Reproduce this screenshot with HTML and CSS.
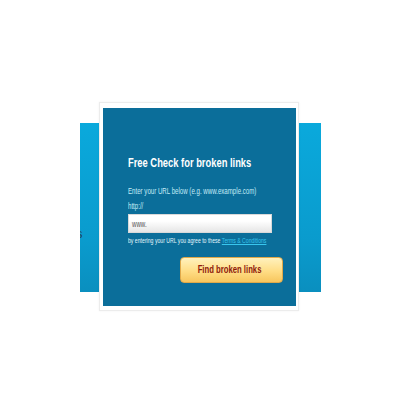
FILE: index.html
```html
<!DOCTYPE html>
<html>
<head>
<meta charset="utf-8">
<link rel="stylesheet" href="styles.css">
</head>
<body>
<div class="stage">
  <div class="strip strip-left"><span class="peek">s</span></div>
  <div class="card">
    <div class="panel">
      <h1 class="title"><span class="cond cond-title">Free Check for broken links</span></h1>
      <p class="hint"><span class="cond cond-hint">Enter your URL below (e.g. www.example.com)</span></p>
      <p class="proto"><span class="cond cond-hint">http://</span></p>
      <div class="field"><span class="cond cond-hint">www.</span></div>
      <p class="agree"><span class="cond cond-agree">by entering your URL you agree to these <a class="terms" href="#">Terms &amp; Conditions</a></span></p>
      <div class="actions"><button class="btn"><span class="cond cond-btn">Find broken links</span></button></div>
    </div>
  </div>
  <div class="strip strip-right"></div>
</div>
</body>
</html>
```
FILE: styles.css
```css
html, body {
  margin: 0;
  padding: 0;
  background: #ffffff;
}
body {
  width: 400px;
  height: 400px;
  overflow: hidden;
  font-family: "Liberation Sans", Arial, sans-serif;
}
.stage {
  display: flex;
  align-items: flex-start;
  padding: 102px 0 0 80px;
}
.strip {
  width: 20px;
  height: 169px;
  margin-top: 21px;
  background: linear-gradient(#0aa9dc, #0a9bcd 70%, #0a8fbf);
  overflow: hidden;
  position: relative;
}
.strip-left {
  margin-right: -1px;
}
.strip-right {
  width: 22px;
}
.peek {
  position: absolute;
  left: -4px;
  top: 103px;
  font-size: 13px;
  line-height: 16px;
  color: #1d4760;
}
.card {
  position: relative;
  z-index: 1;
  background: #ffffff;
  border: 1px solid #ececec;
  padding: 5px 2px 4px 3px;
  box-shadow: 0 0 2px rgba(0,0,0,0.06);
}
.panel {
  width: 193px;
  height: 198px;
  box-sizing: border-box;
  background: #0b6e9a;
  padding: 47px 0 0 25px;
  color: #c5ecf7;
}
.cond {
  display: inline-block;
  white-space: nowrap;
  transform-origin: left center;
}
.cond-title { transform: scaleX(0.78); }
.cond-hint { transform: scaleX(0.72); }
.cond-agree { transform: scaleX(0.735); }
.cond-btn { transform: scaleX(0.7); transform-origin: center center; }
.title {
  margin: 0;
  font-size: 12px;
  line-height: 16px;
  font-weight: bold;
  color: #ffffff;
  white-space: nowrap;
}
.hint {
  margin: 15px 0 0;
  font-size: 8.5px;
  line-height: 11px;
  white-space: nowrap;
}
.proto {
  margin: 4px 0 0;
  font-size: 8.5px;
  line-height: 11px;
}
.field {
  margin-top: 2px;
  width: 144px;
  height: 19px;
  box-sizing: border-box;
  background: linear-gradient(#ffffff, #ffffff 35%, #e6e6e6);
  border: 1px solid #d9d9d9;
  padding: 4px 0 0 3px;
  font-size: 8.5px;
  line-height: 10px;
  color: #555555;
}
.agree {
  margin: 3px 0 0;
  font-size: 7px;
  line-height: 10px;
  color: #e4f6fc;
  white-space: nowrap;
}
.terms {
  color: #38c6ee;
  text-decoration: underline;
}
.actions {
  margin-top: 11px;
  padding-left: 52px;
}
.btn {
  display: flex;
  align-items: center;
  justify-content: center;
  width: 103px;
  height: 26px;
  border: 1px solid #e0a94a;
  border-radius: 4px;
  background: linear-gradient(#fff1bd, #ffdd85 55%, #f7c65e);
  font-family: "Liberation Sans", Arial, sans-serif;
  font-size: 11px;
  font-weight: bold;
  color: #8e1a0c;
  padding: 0 4px 2px 0;
  white-space: nowrap;
}
```
